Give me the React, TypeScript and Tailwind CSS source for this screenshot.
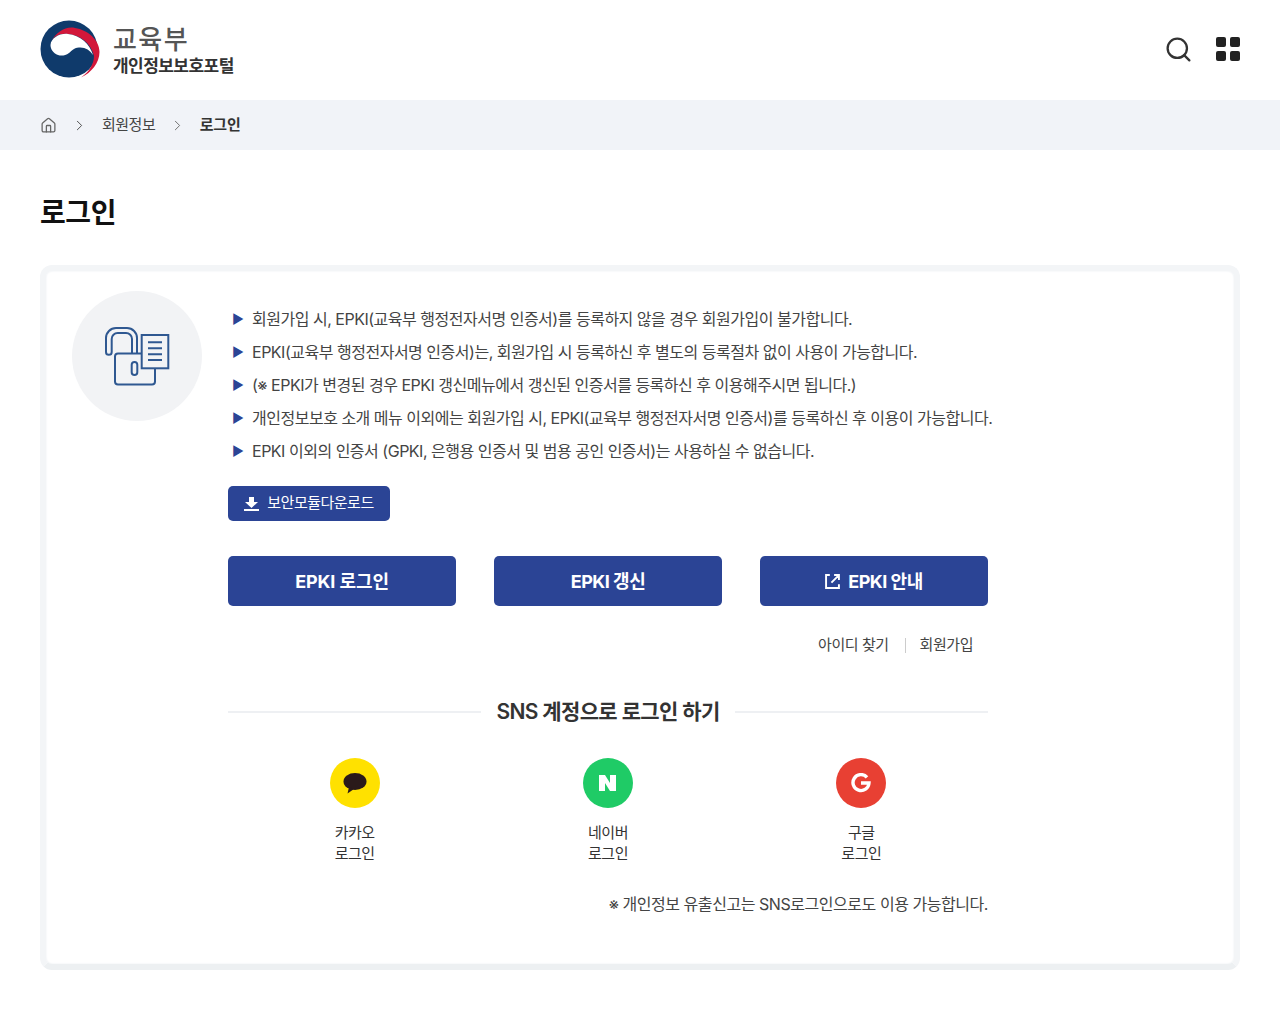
import React from 'react';
import { Search, Home, ChevronRight } from 'lucide-react';

const notices = [
  '회원가입 시, EPKI(교육부 행정전자서명 인증서)를 등록하지 않을 경우 회원가입이 불가합니다.',
  'EPKI(교육부 행정전자서명 인증서)는, 회원가입 시 등록하신 후 별도의 등록절차 없이 사용이 가능합니다.',
  '(※ EPKI가 변경된 경우 EPKI 갱신메뉴에서 갱신된 인증서를 등록하신 후 이용해주시면 됩니다.)',
  '개인정보보호 소개 메뉴 이외에는 회원가입 시, EPKI(교육부 행정전자서명 인증서)를 등록하신 후 이용이 가능합니다.',
  'EPKI 이외의 인증서 (GPKI, 은행용 인증서 및 범용 공인 인증서)는 사용하실 수 없습니다.',
];

function Logo() {
  return (
    <svg viewBox="0 -1 60 60" className="w-[60px] h-[60px]">
      <circle cx="29" cy="29" r="28.5" fill="#0f3a6b" />
      <path d="M11 22C16 12 26 6 35 8C48 10 59.500 20 59.500 32C59.500 43 51 53 41 57.500C49 52 54 44 54 36C51 23 40 15 28 14C20 13 14 16 11 22Z" fill="#d2173a" />
      <path d="M10.500 25C11 18 20 13 28 14C40 15 50 24 53 35C50 30 45 27 39 27.500C33 28 32 31 29 33C25 36 21 36 18 35C13 33 10.500 29 10.500 25Z" fill="#fff" />
    </svg>
  );
}

function GridIcon() {
  return (
    <div className="grid grid-cols-2 gap-1 w-6 h-6">
      <span className="bg-[#222] rounded-[2px]" />
      <span className="bg-[#222] rounded-[2px]" />
      <span className="bg-[#222] rounded-[2px]" />
      <span className="bg-[#222] rounded-[2px]" />
    </div>
  );
}

function SocialItem({ bg, glyph, label }: { bg: string; glyph: React.ReactNode; label: string }) {
  return (
    <div className="w-[253.5px] flex flex-col items-center">
      <div className={`w-[50px] h-[50px] rounded-full flex items-center justify-center ${bg}`}>{glyph}</div>
      <div className="mt-[14px] text-[15px] leading-[21px] text-center text-[#333] tracking-[-0.5px]">
        <div>{label}</div>
        <div>로그인</div>
      </div>
    </div>
  );
}

export default function App() {
  return (
    <div className="bg-white min-h-[1024px] font-['Inter','Noto_Sans_CJK_KR',sans-serif] text-[#333]">
      <header className="h-[100px] px-10 pb-[2px] flex items-center justify-between">
        <div className="flex items-center gap-[13px]">
          <Logo />
          <div>
            <div className="pt-[2px] text-[26px] leading-[32px] tracking-[1.4px] text-[#555] font-medium">교육부</div>
            <div className="-mt-[1px] text-[17px] leading-[22px] font-semibold text-[#333] tracking-[-0.55px]">개인정보보호포털</div>
          </div>
        </div>
        <div className="flex items-center gap-[23px]">
          <Search className="w-[29px] h-[29px] text-[#333]" strokeWidth={1.9} />
          <GridIcon />
        </div>
      </header>

      <nav className="h-[50px] bg-[#f1f3f8] px-10 flex items-center text-[15px] tracking-[-0.5px]">
        <Home className="w-[17px] h-[17px] text-[#666]" strokeWidth={1.8} />
        <ChevronRight className="w-[17px] h-[17px] ml-[13.500px] text-[#444]" strokeWidth={1.3} />
        <span className="ml-[14.500px] text-[#444]">회원정보</span>
        <ChevronRight className="w-[17px] h-[17px] ml-[13.500px] text-[#666]" strokeWidth={1.3} />
        <span className="ml-[14px] font-semibold text-[#333] tracking-[-0.2px]">로그인</span>
      </nav>

      <main className="px-10">
        <h1 className="mt-[44px] text-[28px] leading-[38px] font-bold text-[#111] tracking-[-0.4px]">로그인</h1>

        <section className="mt-[33px] h-[705px] border-[6px] border-[#f3f5f7] border-b-[#edf0f2] rounded-[12px] shadow-[inset_0_0_2px_#e6eaef]">
          <div className="flex">
            <div className="ml-[26px] mt-[20px] w-[130px] h-[130px] rounded-full bg-[#f2f3f5] flex items-center justify-center shrink-0">
              <svg viewBox="0 0 74 62" className="w-[74px] h-[62px]" fill="none" stroke="#2f5891" strokeWidth="2">
                <path d="M11.700 27V14A6 6 0 0 1 17.700 8H26A6 6 0 0 1 32 14V29M37 29V13A10 10 0 0 0 27 3H16A10 10 0 0 0 6 13V27A2.850 2.850 0 0 0 11.700 27" />
                <rect x="15" y="28.500" width="40" height="31" rx="3" fill="#f2f3f5" />
                <rect x="31.700" y="37" width="5.600" height="13" rx="2.800" />
                <rect x="41.700" y="10" width="26.600" height="33.300" fill="#f2f3f5" />
                <path d="M48 17.300H62M48 23.300H62M48 29.300H62M48 35H62" />
              </svg>
            </div>
            <div className="ml-[26px] mt-[32px] w-[760px]">
              <ul className="text-[16px] leading-[33px] tracking-[-0.49px] text-[#444]">
                {notices.map((text) => (
                  <li key={text} className="flex items-center whitespace-nowrap">
                    <span className="w-[24px] shrink-0 text-[#2b4495] text-[13px] pl-[4px]">▶</span>
                    <span>{text}</span>
                  </li>
                ))}
              </ul>
              <button className="mt-[18px] h-[35px] w-[162px] bg-[#2b4495] rounded-[5px] text-white text-[15px] tracking-[-0.5px] flex items-center justify-center gap-[8px]">
                <svg viewBox="0 0 15 14" className="w-[15px] h-[14px]" fill="#fff">
                  <path d="M5 0H10V5H14L7.500 11L1 5H5Z" />
                  <rect x="0" y="12" width="15" height="2" />
                </svg>
                보안모듈다운로드
              </button>
              <div className="mt-[35px] flex justify-between">
                <button className="h-[50px] w-[228px] bg-[#2b4495] rounded-[5px] text-white text-[18px] pt-[1px] font-bold tracking-[-0.1px]">EPKI 로그인</button>
                <button className="h-[50px] w-[228px] bg-[#2b4495] rounded-[5px] text-white text-[18px] pt-[1px] font-bold tracking-[-0.5px]">EPKI 갱신</button>
                <button className="h-[50px] w-[228px] bg-[#2b4495] rounded-[5px] text-white text-[18px] pt-[1px] font-bold tracking-[-0.5px] flex items-center justify-center gap-[8px]">
                  <svg viewBox="0 0 14 14" className="w-[15px] h-[15px]" fill="none" stroke="#fff" strokeWidth="1.800">
                    <path d="M4.500 1H1V13H13V9.500M6 8L13 1M8.500 1H13V5.500" />
                  </svg>
                  EPKI 안내
                </button>
              </div>
              <div className="mt-[29px] h-[20px] flex justify-end items-center pr-[15px] text-[15px] tracking-[-0.45px] text-[#444]">
                <span>아이디 찾기</span>
                <span className="ml-[16px] mr-[14px] w-px h-[15px] bg-[#ccc]" />
                <span>회원가입</span>
              </div>
              <div className="mt-[41px] flex items-center gap-[15px]">
                <span className="flex-1 h-[2px] bg-[#eef0f3]" />
                <span className="text-[21px] leading-[32px] font-semibold tracking-[-0.65px] text-[#333]">SNS 계정으로 로그인 하기</span>
                <span className="flex-1 h-[2px] bg-[#eef0f3]" />
              </div>
              <div className="mt-[30px] flex">
                <SocialItem
                  bg="bg-[#ffe100]"
                  label="카카오"
                  glyph={
                    <svg viewBox="0 0 24 22" className="w-[24px] h-[22px]" fill="#2a1a1a">
                      <ellipse cx="12" cy="9.500" rx="11.500" ry="8.500" />
                      <path d="M6 15L4.500 21.500L11 17Z" />
                    </svg>
                  }
                />
                <SocialItem
                  bg="bg-[#1fcb66]"
                  label="네이버"
                  glyph={
                    <svg viewBox="0 0 17 16" className="w-[17px] h-[16px]" fill="#fff">
                      <path d="M0 0H6L11 8V0H17V16H11L6 8V16H0Z" />
                    </svg>
                  }
                />
                <SocialItem
                  bg="bg-[#e84033]"
                  label="구글"
                  glyph={
                    <svg viewBox="0 0 20 20" className="w-[20px] h-[20px]" fill="none" stroke="#fff" strokeWidth="3.400">
                      <path d="M16 4.300A8 8 0 1 0 18 10H10" />
                    </svg>
                  }
                />
              </div>
              <p className="mt-[28px] text-right text-[16px] leading-[24px] tracking-[-0.45px] text-[#444]">※ 개인정보 유출신고는 SNS로그인으로도 이용 가능합니다.</p>
            </div>
          </div>
        </section>
      </main>
    </div>
  );
}
